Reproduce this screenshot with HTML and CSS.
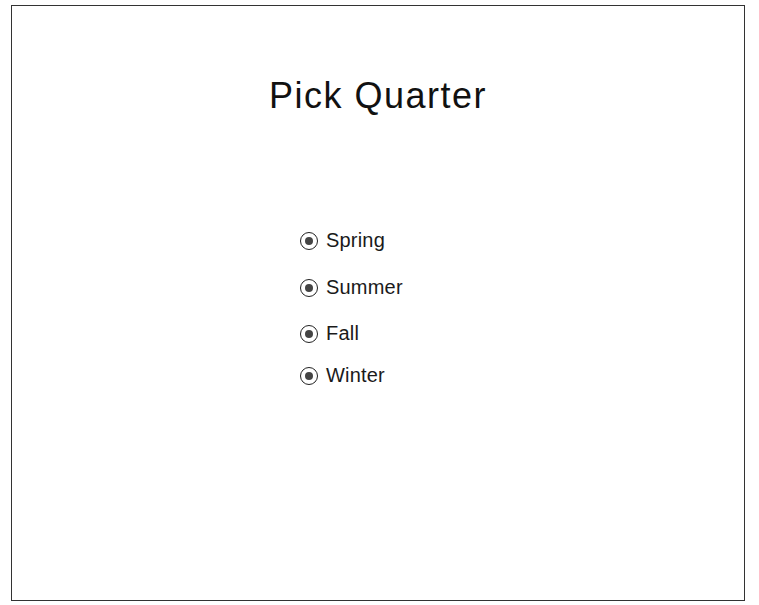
FILE: index.html
```html
<!DOCTYPE html>
<html>
<head>
<meta charset="utf-8">
<link rel="stylesheet" href="styles.css">
</head>
<body>
<div class="frame">
  <h1 class="title">Pick Quarter</h1>
  <div class="options">
    <label class="option opt-spring"><span class="radio"><span class="dot"></span></span><span class="label">Spring</span></label>
    <label class="option opt-summer"><span class="radio"><span class="dot"></span></span><span class="label">Summer</span></label>
    <label class="option opt-fall"><span class="radio"><span class="dot"></span></span><span class="label">Fall</span></label>
    <label class="option opt-winter"><span class="radio"><span class="dot"></span></span><span class="label">Winter</span></label>
  </div>
</div>
</body>
</html>
```
FILE: styles.css
```css
html, body {
  margin: 0;
  padding: 0;
  background: #fff;
}
body {
  font-family: "Liberation Sans", Arial, sans-serif;
  color: #111;
}
.frame {
  box-sizing: border-box;
  margin: 5px 14px 0 11px;
  height: 596px;
  border: 1px solid #333;
  display: flex;
  flex-direction: column;
}
.title {
  margin: 70px 0 0 0;
  font-size: 36px;
  letter-spacing: 1.5px;
  font-weight: normal;
  text-align: center;
  line-height: 40px;
}
.options {
  display: flex;
  flex-direction: column;
  padding-left: 288px;
  margin-top: 113px;
}
.option {
  display: flex;
  align-items: center;
  height: 23px;
  font-size: 20px;
  letter-spacing: 0.2px;
  color: #1a1a1a;
}
.opt-summer { margin-top: 24px; }
.opt-fall { margin-top: 23px; }
.opt-winter { margin-top: 19px; }
.radio {
  box-sizing: border-box;
  width: 18px;
  height: 18px;
  border: 1.5px solid #222;
  border-radius: 50%;
  display: flex;
  align-items: center;
  justify-content: center;
  margin-right: 8px;
}
.dot {
  width: 8px;
  height: 8px;
  border-radius: 50%;
  background: #444;
}
.label {
  line-height: 23px;
}
```
